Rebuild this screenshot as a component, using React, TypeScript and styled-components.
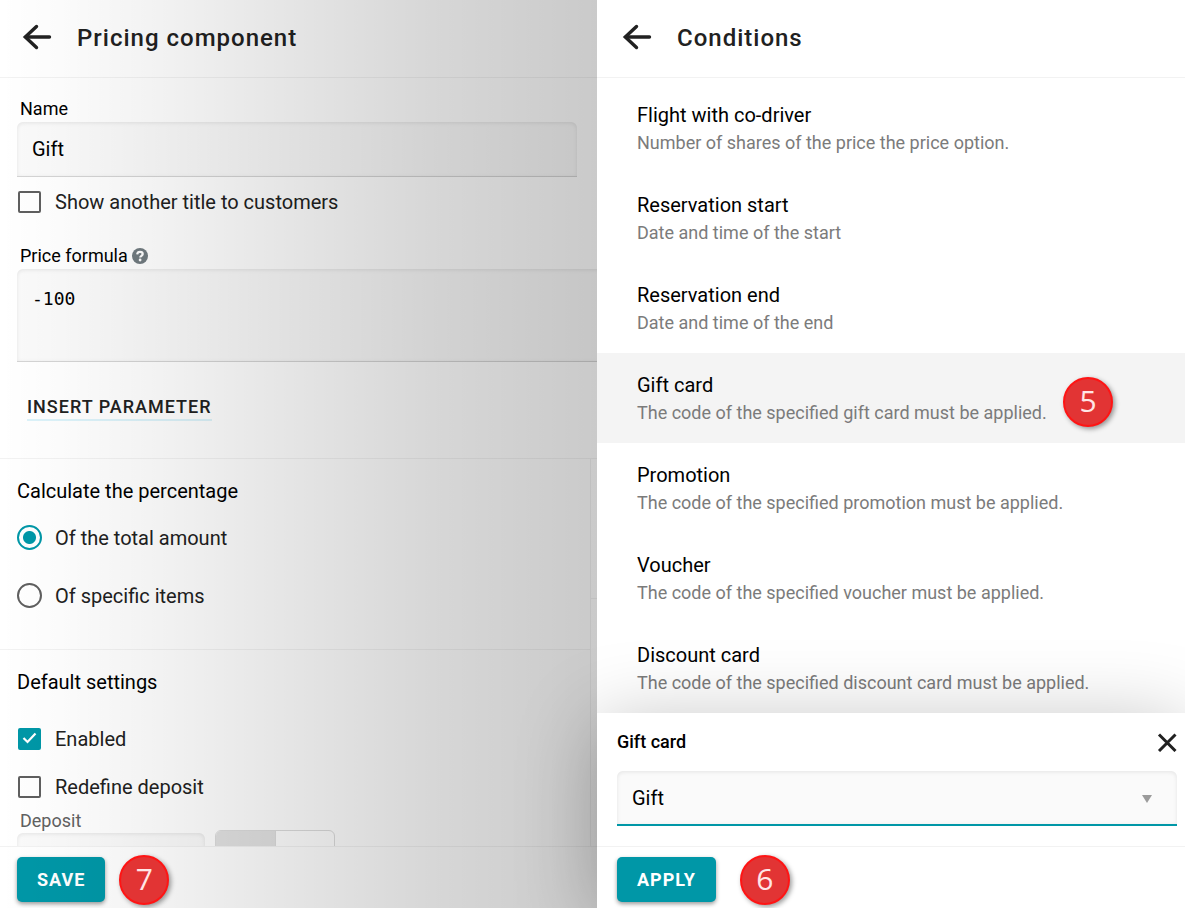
import React, { useState } from 'react';
import styled, { createGlobalStyle } from 'styled-components';

const teal = '#0097a7';
const ink = '#212121';

const GlobalStyle = createGlobalStyle`
  *, *::before, *::after { box-sizing: border-box; }
  body {
    margin: 0;
    background: #fff;
    color: #000;
    font-family: Roboto, "Liberation Sans", sans-serif;
    font-size: 20px;
    line-height: 28px;
  }
  button, input, select, textarea { font: inherit; color: inherit; }
`;

const Page = styled.div`
  display: grid;
  grid-template-columns: 597fr 588fr;
  height: 100vh;
  overflow: hidden;
`;

const Panel = styled.section`
  display: flex;
  flex-direction: column;
  min-width: 0;
  min-height: 0;
  position: relative;
  background: #fff;
`;

const FormPanel = styled(Panel)`
  &::after {
    content: '';
    position: absolute;
    inset: 0;
    pointer-events: none;
    background: linear-gradient(
      to right,
      rgba(0, 0, 0, 0) 0%,
      rgba(0, 0, 0, 0.02) 12%,
      rgba(0, 0, 0, 0.06) 30%,
      rgba(0, 0, 0, 0.105) 50%,
      rgba(0, 0, 0, 0.155) 72%,
      rgba(0, 0, 0, 0.206) 100%
    );
  }
`;

const ConditionsPanel = styled(Panel)`
  z-index: 1;
`;

const Header = styled.header`
  display: flex;
  align-items: center;
  flex: none;
  gap: 23px;
  height: 78px;
  padding: 0 20px 2px;
  border-bottom: 1px solid #f2f2f2;
`;

const ConditionsHeader = styled(Header)`
  padding-left: 23px;
`;

const IconButton = styled.button`
  display: flex;
  padding: 0;
  border: 0;
  background: none;
  color: ${ink};
  cursor: pointer;
`;

const Title = styled.h1`
  margin: 0;
  color: ${ink};
  font-size: 24px;
  font-weight: 500;
  line-height: 32px;
  letter-spacing: 1px;
`;

const FormBody = styled.form`
  flex: 1;
  min-height: 0;
  overflow: hidden;
`;

const FieldGroup = styled.div`
  padding: 19px 0 37px 17px;
`;

const FieldLabel = styled.label<{ $muted?: boolean }>`
  display: flex;
  align-items: center;
  gap: 4px;
  padding: 0 3px;
  font-size: 18px;
  line-height: 24px;
  color: ${({ $muted }) => ($muted ? '#616161' : '#000')};
`;

const boxed = `
  display: block;
  border: 0;
  border-bottom: 1px solid #d4d4d4;
  border-radius: 6px 6px 0 0;
  background: #fafafa;
  box-shadow: inset 0 1px 4px rgba(0, 0, 0, 0.09);
  outline: 0;
`;

const TextInput = styled.input`
  ${boxed}
  width: calc(100% - 20px);
  height: 55px;
  margin: 1px 0 11px;
  padding: 0 15px 1px;
`;

const Formula = styled.textarea`
  ${boxed}
  width: calc(100% + 20px);
  height: 93px;
  margin: 1px 0 31px;
  padding: 16px 15px;
  font-family: "DejaVu Sans Mono", "Liberation Mono", monospace;
  font-size: 18px;
  resize: none;
`;

const Choice = styled.label<{ $space?: number }>`
  display: flex;
  align-items: center;
  gap: 13px;
  margin-bottom: ${({ $space = 0 }) => $space}px;
  color: ${ink};
`;

const CheckSlot = styled.span`
  display: grid;
  place-items: center;
  width: 25px;
  height: 28px;
  > * { grid-area: 1 / 1; }
  svg { pointer-events: none; visibility: hidden; margin-bottom: 2px; }
  input:checked + svg { visibility: visible; }
`;

const Checkbox = styled.input.attrs({ type: 'checkbox' })`
  appearance: none;
  width: 23px;
  height: 22px;
  margin: 0;
  border: 2px solid #5f5f5f;
  border-radius: 2px;
  &:checked { border-color: ${teal}; background: ${teal}; }
`;

const Radio = styled.input.attrs({ type: 'radio' })`
  appearance: none;
  width: 25px;
  height: 25px;
  margin: 0 0 1px;
  border: 2px solid #5f5f5f;
  border-radius: 50%;
  &:checked {
    border-color: ${teal};
    background: radial-gradient(circle, ${teal} 6px, transparent 7px);
  }
`;

const LinkButton = styled.button`
  display: block;
  height: 28px;
  margin-left: 10px;
  padding: 2px 0 0;
  border: 0;
  border-bottom: 2px solid #dcf3fa;
  background: none;
  color: ${ink};
  font-size: 18px;
  font-weight: 500;
  line-height: 24px;
  letter-spacing: 1px;
  text-transform: uppercase;
  cursor: pointer;
`;

const Settings = styled.div`
  display: grid;
  grid-template-columns: minmax(0, 1fr) 6px;
  border-top: 1px solid #f2f2f2;
`;

const SettingsMain = styled.div`
  border-right: 1px solid #f2f2f2;
`;

const NextColumn = styled.div`
  height: 140px;
  border-bottom: 1px solid #f2f2f2;
`;

const Section = styled.fieldset`
  min-width: 0;
  margin: 0;
  padding: 18px 17px 39px;
  border: 0;
  & + & { border-top: 1px solid #f2f2f2; }
`;

const SectionTitle = styled.legend<{ $space: number }>`
  float: left;
  width: 100%;
  margin-bottom: ${({ $space }) => $space}px;
  padding: 0;
  & + * { clear: both; }
`;

const DepositRow = styled.div`
  display: flex;
  align-items: flex-start;
  gap: 10px;
`;

const DepositField = styled.div`
  width: 188px;
`;

const DepositInput = styled(TextInput)`
  width: 100%;
  margin: 0;
`;

const Units = styled.div`
  display: flex;
  width: 120px;
  height: 55px;
  margin-top: 21px;
  border: 1px solid #dcdcdc;
  border-radius: 6px;
  overflow: hidden;
`;

const Unit = styled.button<{ $active?: boolean }>`
  flex: 1;
  border: 0;
  background: ${({ $active }) => ($active ? '#e2e2e2' : 'transparent')};
  & + & { border-left: 1px solid #dcdcdc; }
`;

const Footer = styled.footer<{ $gap: number }>`
  display: flex;
  align-items: center;
  flex: none;
  gap: ${({ $gap }) => $gap}px;
  padding: 8px 20px 3px;
  border-top: 1px solid #f2f2f2;
`;

const FormFooter = styled(Footer)`
  padding-left: 17px;
`;

const PrimaryButton = styled.button`
  height: 45px;
  margin-bottom: 1px;
  padding: 0 20px;
  border: 0;
  border-radius: 5px;
  background: ${teal};
  box-shadow: 0 2px 4px rgba(0, 0, 0, 0.4);
  color: #fff;
  font-size: 18px;
  font-weight: 700;
  letter-spacing: 1px;
  text-transform: uppercase;
  cursor: pointer;
`;

const Badge = styled.span`
  position: relative;
  z-index: 1;
  display: flex;
  align-items: center;
  justify-content: center;
  flex: none;
  width: 50px;
  height: 50px;
  padding-bottom: 3px;
  border: 2px solid #ff1414;
  border-radius: 50%;
  background: #e23434;
  box-shadow: 2px 2px 5px rgba(0, 0, 0, 0.4);
  color: #ffe6e6;
  font-family: "Open Sans", "Noto Sans", sans-serif;
  font-size: 30px;
  line-height: 40px;
`;

const List = styled.ul`
  flex: 1;
  min-height: 0;
  margin: 0;
  padding: 5px 0 0;
  overflow: hidden;
  list-style: none;
`;

const Item = styled.li<{ $selected: boolean }>`
  position: relative;
  background: ${({ $selected }) => ($selected ? '#f4f4f4' : 'transparent')};
`;

const ItemBadge = styled(Badge)`
  position: absolute;
  top: 24px;
  right: 72px;
`;

const ItemButton = styled.button`
  display: block;
  width: 100%;
  height: 90px;
  padding: 18px 40px 16px;
  border: 0;
  background: none;
  text-align: left;
  cursor: pointer;
`;

const ItemTitle = styled.span`
  display: block;
`;

const ItemText = styled.span`
  display: block;
  color: #7b7b7b;
  font-size: 18px;
`;

const Sheet = styled.div`
  flex: none;
  position: relative;
  z-index: 1;
  background: #fff;
  box-shadow: 0 10px 80px rgba(0, 0, 0, 0.25);
`;

const SheetBody = styled.div`
  padding: 15px 8px 20px 20px;
`;

const SheetHead = styled.div`
  display: flex;
  align-items: center;
  justify-content: space-between;
  height: 28px;
  margin-bottom: 15px;
`;

const SheetLabel = styled.label`
  font-size: 18px;
  font-weight: 500;
`;

const SelectWrap = styled.div`
  display: grid;
  align-items: center;
  > * { grid-area: 1 / 1; }
  svg { justify-self: end; margin-right: 25px; pointer-events: none; }
`;

const Select = styled.select`
  ${boxed}
  appearance: none;
  width: 100%;
  height: 55px;
  padding: 0 15px;
  border-bottom: 2px solid ${teal};
`;

const ArrowIcon = () => (
  <svg width="34" height="34" viewBox="0 0 34 34" fill="none" stroke="currentColor" strokeWidth="3.4" strokeLinecap="round" aria-hidden="true">
    <path d="M29.500 16H6" />
    <path d="M16.500 5.500 5.300 16l11.200 10.500" />
  </svg>
);

const CloseIcon = () => (
  <svg width="20" height="20" viewBox="0 0 20 20" fill="none" stroke="currentColor" strokeWidth="3" aria-hidden="true">
    <path d="M2 2.500 18.500 19M18.500 2.500 2 19" />
  </svg>
);

const CheckIcon = () => (
  <svg width="15" height="13" viewBox="0 0 15 13" fill="none" stroke="#fff" strokeWidth="2.2" aria-hidden="true">
    <path d="M1.500 6 5.500 10 13.500 1.500" />
  </svg>
);

const HelpIcon = () => (
  <svg width="16" height="16" viewBox="0 0 16 16" aria-hidden="true">
    <circle cx="8" cy="8" r="8" fill="#717b80" />
    <path d="M5.200 6.300C5.400 4.700 6.500 3.900 8 3.900c1.600 0 2.700.8 2.700 2.200 0 1.800-2.500 1.700-2.500 3.500" fill="none" stroke="#fff" strokeWidth="2.200" />
    <circle cx="8.100" cy="12" r="1.400" fill="#fff" />
  </svg>
);

const CaretIcon = () => (
  <svg width="10" height="8" viewBox="0 0 10 8" aria-hidden="true">
    <path d="M0 0h10L5 8z" fill="#9b9b9b" />
  </svg>
);

const conditions = [
  ['Flight with co-driver', 'Number of shares of the price the price option.'],
  ['Reservation start', 'Date and time of the start'],
  ['Reservation end', 'Date and time of the end'],
  ['Gift card', 'The code of the specified gift card must be applied.'],
  ['Promotion', 'The code of the specified promotion must be applied.'],
  ['Voucher', 'The code of the specified voucher must be applied.'],
  ['Discount card', 'The code of the specified discount card must be applied.'],
];

export default function App() {
  const [selected, setSelected] = useState('Gift card');

  return (
    <>
      <GlobalStyle />
      <Page>
        <FormPanel>
          <Header>
            <IconButton type="button" aria-label="Back"><ArrowIcon /></IconButton>
            <Title>Pricing component</Title>
          </Header>
          <FormBody id="pricing" onSubmit={(e) => e.preventDefault()}>
            <FieldGroup>
              <FieldLabel htmlFor="name">Name</FieldLabel>
              <TextInput id="name" defaultValue="Gift" />
              <Choice $space={28}>
                <CheckSlot><Checkbox /><CheckIcon /></CheckSlot>
                Show another title to customers
              </Choice>
              <FieldLabel htmlFor="formula">Price formula <HelpIcon /></FieldLabel>
              <Formula id="formula" defaultValue="-100" spellCheck={false} />
              <LinkButton type="button">Insert parameter</LinkButton>
            </FieldGroup>
            <Settings>
              <SettingsMain>
                <Section>
                  <SectionTitle $space={19}>Calculate the percentage</SectionTitle>
                  <Choice $space={30}><Radio name="base" defaultChecked />Of the total amount</Choice>
                  <Choice><Radio name="base" />Of specific items</Choice>
                </Section>
                <Section>
                  <SectionTitle $space={29}>Default settings</SectionTitle>
                  <Choice $space={20}>
                    <CheckSlot><Checkbox defaultChecked /><CheckIcon /></CheckSlot>
                    Enabled
                  </Choice>
                  <Choice $space={8}>
                    <CheckSlot><Checkbox /><CheckIcon /></CheckSlot>
                    Redefine deposit
                  </Choice>
                  <DepositRow>
                    <DepositField>
                      <FieldLabel htmlFor="deposit" $muted>Deposit</FieldLabel>
                      <DepositInput id="deposit" />
                    </DepositField>
                    <Units>
                      <Unit type="button" $active aria-label="Percent" />
                      <Unit type="button" aria-label="Amount" />
                    </Units>
                  </DepositRow>
                </Section>
              </SettingsMain>
              <NextColumn />
            </Settings>
          </FormBody>
          <FormFooter $gap={14}>
            <PrimaryButton type="submit" form="pricing">Save</PrimaryButton>
            <Badge>7</Badge>
          </FormFooter>
        </FormPanel>

        <ConditionsPanel>
          <ConditionsHeader>
            <IconButton type="button" aria-label="Back"><ArrowIcon /></IconButton>
            <Title as="h2">Conditions</Title>
          </ConditionsHeader>
          <List>
            {conditions.map(([title, text]) => (
              <Item key={title} $selected={title === selected}>
                <ItemButton type="button" onClick={() => setSelected(title)}>
                  <ItemTitle>{title}</ItemTitle>
                  <ItemText>{text}</ItemText>
                </ItemButton>
                {title === 'Gift card' && <ItemBadge>5</ItemBadge>}
              </Item>
            ))}
          </List>
          <Sheet>
            <SheetBody>
              <SheetHead>
                <SheetLabel htmlFor="card">Gift card</SheetLabel>
                <IconButton type="button" aria-label="Close"><CloseIcon /></IconButton>
              </SheetHead>
              <SelectWrap>
                <Select id="card" defaultValue="Gift"><option>Gift</option></Select>
                <CaretIcon />
              </SelectWrap>
            </SheetBody>
            <Footer $gap={24}>
              <PrimaryButton type="button">Apply</PrimaryButton>
              <Badge>6</Badge>
            </Footer>
          </Sheet>
        </ConditionsPanel>
      </Page>
    </>
  );
}
